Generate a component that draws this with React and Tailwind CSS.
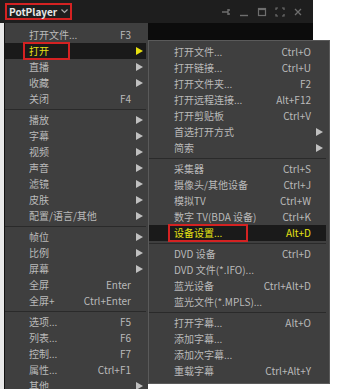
import React from "react";

const leftGroups = [
  [
    { label: "打开文件...", key: "F3" },
    { label: "打开", sub: true, active: true, boxed: true },
    { label: "直播", sub: true },
    { label: "收藏", sub: true },
    { label: "关闭", key: "F4" },
  ],
  [
    { label: "播放", sub: true },
    { label: "字幕", sub: true },
    { label: "视频", sub: true },
    { label: "声音", sub: true },
    { label: "滤镜", sub: true },
    { label: "皮肤", sub: true },
    { label: "配置/语言/其他", sub: true },
  ],
  [
    { label: "帧位", sub: true },
    { label: "比例", sub: true },
    { label: "屏幕", sub: true },
    { label: "全屏", key: "Enter" },
    { label: "全屏+", key: "Ctrl+Enter" },
  ],
  [
    { label: "选项...", key: "F5" },
    { label: "列表...", key: "F6" },
    { label: "控制...", key: "F7" },
    { label: "属性...", key: "Ctrl+F1" },
    { label: "其他", sub: true },
  ],
];

const rightGroups = [
  [
    { label: "打开文件...", key: "Ctrl+O" },
    { label: "打开链接...", key: "Ctrl+U" },
    { label: "打开文件夹...", key: "F2" },
    { label: "打开远程连接...", key: "Alt+F12" },
    { label: "打开剪贴板", key: "Ctrl+V" },
    { label: "首选打开方式", sub: true },
    { label: "简索", sub: true },
  ],
  [
    { label: "采集器", key: "Ctrl+S" },
    { label: "摄像头/其他设备", key: "Ctrl+J" },
    { label: "模拟TV", key: "Ctrl+W" },
    { label: "数字 TV(BDA 设备)", key: "Ctrl+K" },
    { label: "设备设置...", key: "Alt+D", active: true, boxed: true },
  ],
  [
    { label: "DVD 设备", key: "Ctrl+D" },
    { label: "DVD 文件(*.IFO)..." },
    { label: "蓝光设备", key: "Ctrl+Alt+D" },
    { label: "蓝光文件(*.MPLS)..." },
  ],
  [
    { label: "打开字幕...", key: "Alt+O" },
    { label: "添加字幕..." },
    { label: "添加次字幕..." },
    { label: "重载字幕", key: "Ctrl+Alt+Y" },
  ],
];

function Arrow({ active }) {
  return (
    <svg width="7" height="8" viewBox="0 0 7 8">
      <path d="M0 0 L7 4 L0 8 Z" fill={active ? "#e8e010" : "#c0c0c0"} />
    </svg>
  );
}

function Row({ item, pl, boxW }) {
  return (
    <div
      className={`relative flex h-4 items-center pr-[3px] ${item.active ? "bg-[#1a1a1a] text-[#e6e214]" : "text-[#bababa]"}`}
      style={{ paddingLeft: pl }}
    >
      {item.boxed && (
        <div
          className="absolute top-[-1px] h-[18px] border-2 border-[#d42222]"
          style={{ left: pl - 6, width: boxW }}
        />
      )}
      <span className="flex-1 whitespace-nowrap">{item.label}</span>
      <span className="whitespace-nowrap">{item.key}</span>
      <span className="flex w-[12px] justify-end">{item.sub && <Arrow active={item.active} />}</span>
    </div>
  );
}

function Menu({ groups, pl, boxW, className }) {
  return (
    <div className={className}>
      {groups.map((g, i) => (
        <div key={i}>
          {i > 0 && (
            <div className="flex h-[5px] items-center">
              <div className="h-px w-full bg-[#2a2a2a]" />
            </div>
          )}
          {g.map((item) => (
            <Row key={item.label} item={item} pl={pl} boxW={boxW} />
          ))}
        </div>
      ))}
    </div>
  );
}

export default function App() {
  return (
    <div
      className="h-[389px] w-[345px] overflow-hidden bg-white text-[10px] leading-none"
      style={{ fontFamily: '"Noto Sans CJK SC", "Noto Sans", sans-serif' }}
    >
      {/* title bar */}
      <div className="flex h-[23px] w-[313px] items-center bg-[#1e1e1e] pl-[5px] pr-[10px]">
        <div className="flex h-[17px] items-center gap-[4px] border-2 border-[#d42222] px-[2px] font-bold text-[10px] text-[#e8e8e8]">
          PotPlayer
          <svg width="7" height="5" viewBox="0 0 7 5">
            <path d="M0.5 0.5 L3.5 3.5 L6.5 0.5" stroke="#aaa" strokeWidth="1.2" fill="none" />
          </svg>
        </div>
        <div className="ml-auto flex items-center gap-[8px]">
          <svg width="10" height="10" viewBox="0 0 10 10">
            <path d="M1 5 H7 M7 2 V8 M7 3 H9 M7 7 H9" stroke="#6e6e6e" strokeWidth="1.4" fill="none" />
          </svg>
          <svg width="10" height="10" viewBox="0 0 10 10">
            <path d="M1 8.5 H9" stroke="#6e6e6e" strokeWidth="1.4" />
          </svg>
          <svg width="10" height="10" viewBox="0 0 10 10">
            <rect x="1.5" y="1.5" width="7" height="7" stroke="#6e6e6e" strokeWidth="1.2" fill="none" />
            <path d="M1.5 2.5 H8.5" stroke="#6e6e6e" strokeWidth="1.2" />
          </svg>
          <svg width="10" height="10" viewBox="0 0 10 10">
            <path d="M1 3 V1 H3 M7 1 H9 V3 M9 7 V9 H7 M3 9 H1 V7" stroke="#6e6e6e" strokeWidth="1.2" fill="none" />
          </svg>
          <svg width="10" height="10" viewBox="0 0 10 10">
            <path d="M2 2 L8 8 M8 2 L2 8" stroke="#6e6e6e" strokeWidth="1.3" />
          </svg>
        </div>
      </div>

      <div className="flex items-start">
        <div className="h-[366px] w-[4px] bg-[#e8e8e8]" />
        <Menu
          groups={leftGroups}
          pl={24}
          boxW={47}
          className="h-[366px] w-[144px] border-l border-[#111] bg-[#3f3f3f] pt-[4px] pr-[2px]"
        />
        <div className="flex flex-col items-start">
          <div className="h-[17px] w-[165px] bg-[#0c0c0c]" />
          <Menu
            groups={rightGroups}
            pl={25}
            boxW={80}
            className="w-[182px] border border-[#5a5a5a] bg-[#3f3f3f] pt-[3px] pb-[4px] pr-[3px]"
          />
        </div>
      </div>
    </div>
  );
}
